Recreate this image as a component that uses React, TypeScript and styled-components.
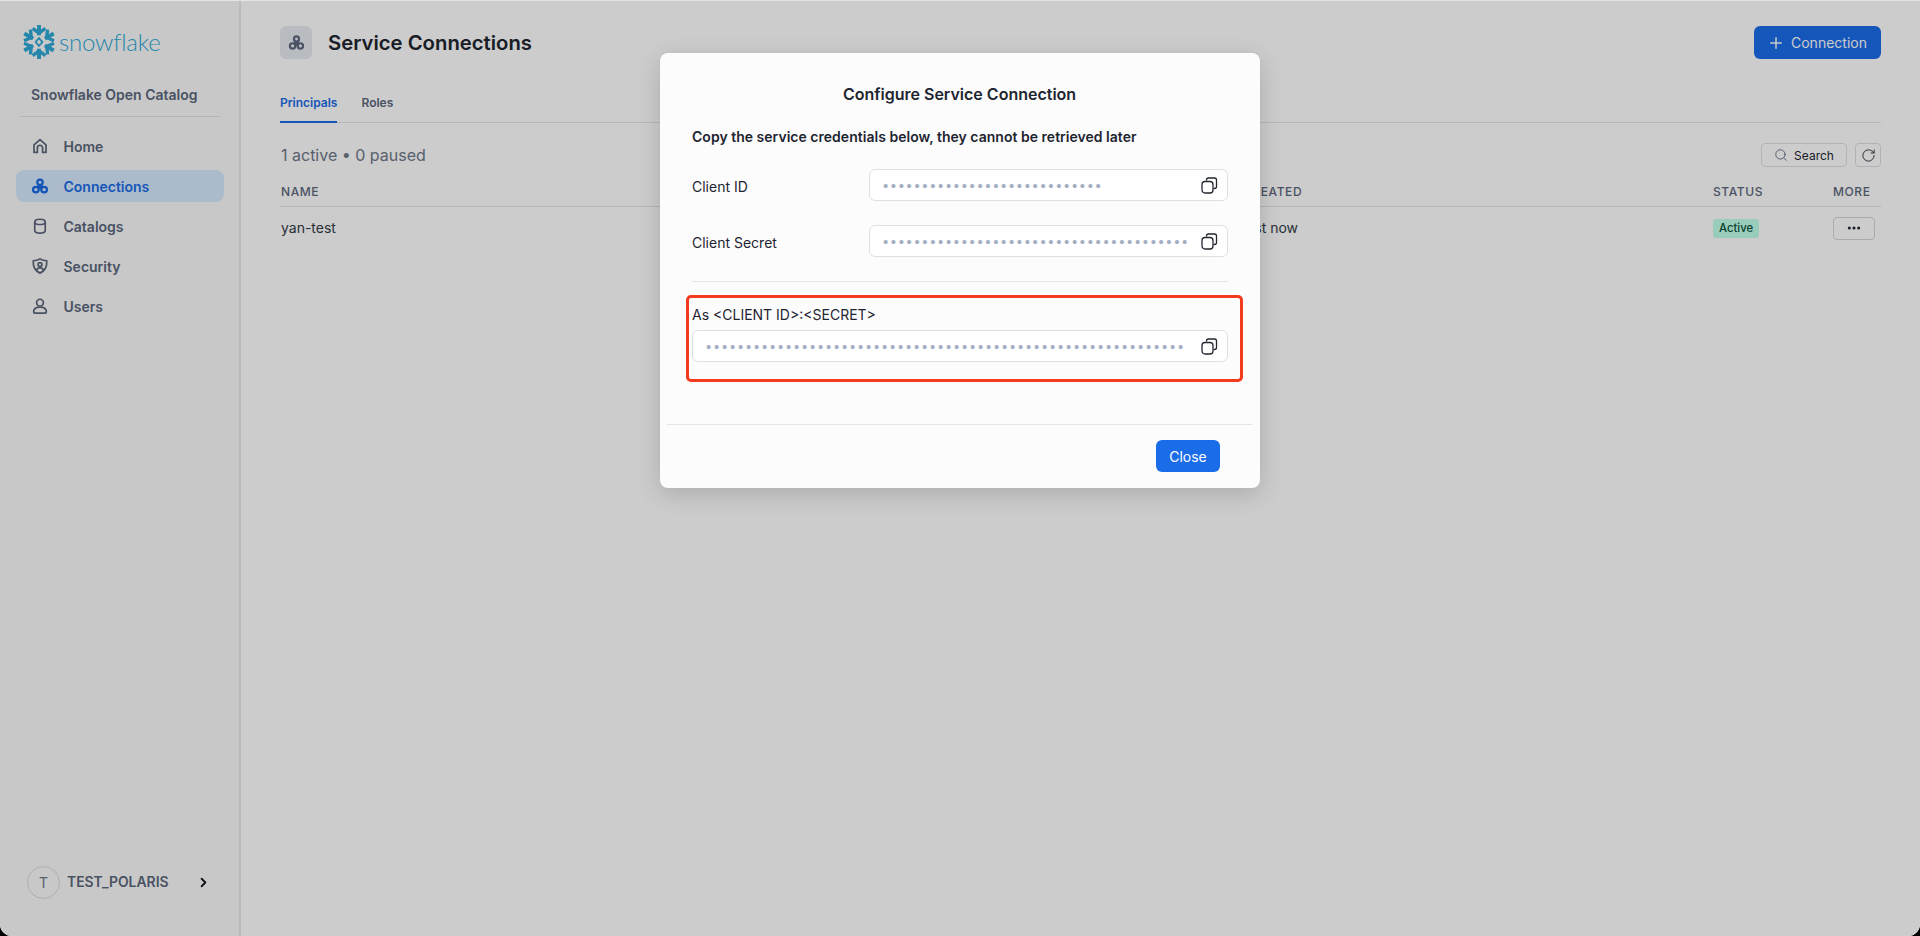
import React from "react";
import styled, { createGlobalStyle } from "styled-components";
import { Plus, Search, ChevronRight, RotateCw, Ellipsis } from "lucide-react";

const Global = createGlobalStyle`
  html, body { margin: 0; padding: 0; background: #000; height: 100%; overflow: hidden; }
  #root { height: 100%; }
  * { box-sizing: border-box; }
  body { font-family: Inter, "Liberation Sans", sans-serif; }
`;

const Frame = styled.div`
  position: relative;
  display: flex;
  width: 1920px;
  height: 936px;
  background: #ffffff;
  border-top: 1px solid #e4e4e4;
  border-radius: 0 0 12px 12px;
  overflow: hidden;
`;

const Sidebar = styled.aside`
  width: 241px;
  flex: none;
  display: flex;
  flex-direction: column;
  background: #fbfbfb;
  border-right: 2px solid #e9e9e9;
  padding: 24px 16px 0 16px;
`;

const LogoRow = styled.div`
  display: flex;
  align-items: center;
  gap: 3px;
  height: 34px;
  padding-left: 6px;
`;

const LogoWord = styled.span`
  font-family: Lato, "Open Sans", sans-serif;
  font-weight: 300;
  font-size: 24px;
  line-height: 32px;
  letter-spacing: -0.2px;
  color: #2fa9d6;
`;

const Org = styled.div`
  margin: 25px 3px 0 4px;
  padding: 0 0 10px 11px;
  border-bottom: 1px solid #dfe2e7;
  font-size: 14px;
  font-weight: 600;
  line-height: 22px;
  color: #5c677c;
`;

const NavList = styled.nav`
  display: flex;
  flex-direction: column;
  gap: 8px;
  margin-top: 13px;
`;

const NavItem = styled.div<{ $active?: boolean }>`
  display: flex;
  align-items: center;
  gap: 14.5px;
  width: 208px;
  height: 32px;
  padding-left: 15px;
  border-radius: 8px;
  font-size: 14px;
  font-weight: 600;
  background: ${(p) => (p.$active ? "#d7eaff" : "transparent")};
  color: ${(p) => (p.$active ? "#1a6ce7" : "#5c677c")};
  svg { flex: none; }
`;

const Account = styled.div`
  margin-top: auto;
  margin-bottom: 38px;
  display: flex;
  align-items: center;
  padding-left: 11px;
  height: 32px;
  font-size: 13.9px;
  font-weight: 600;
  color: #5c677c;
`;

const Avatar = styled.div`
  width: 33px;
  height: 33px;
  border-radius: 50%;
  border: 1px solid #d7dade;
  display: flex;
  align-items: center;
  justify-content: center;
  font-size: 14px;
  font-weight: 400;
  color: #6e7889;
  margin-right: 7px;
`;

const AccountChevron = styled.span`
  margin-left: 27px;
  display: flex;
  color: #14181f;
`;

const Main = styled.main`
  flex: 1;
  min-width: 0;
  display: flex;
  flex-direction: column;
  padding: 25px 39px 0 39px;
  background: #ffffff;
`;

const Header = styled.header`
  display: flex;
  align-items: center;
  justify-content: space-between;
  height: 33px;
`;

const TitleGroup = styled.div`
  display: flex;
  align-items: center;
  gap: 16px;
`;

const TitleIcon = styled.div`
  width: 32px;
  height: 33px;
  border-radius: 6px;
  background: #e7ebf1;
  color: #5c677c;
  display: flex;
  align-items: center;
  justify-content: center;
`;

const Title = styled.h1`
  margin: 0;
  font-size: 20.3px;
  font-weight: 600;
  color: #1e2530;
`;

const PrimaryButton = styled.button`
  display: flex;
  align-items: center;
  gap: 6px;
  width: 127px;
  height: 33px;
  padding: 0 0 0 13px;
  border: 0;
  border-radius: 6px;
  background: #1a6ce9;
  color: #ffffff;
  font-family: inherit;
  font-size: 14px;
  font-weight: 400;
`;

const Tabs = styled.div`
  display: flex;
  gap: 24px;
  height: 40px;
  margin-top: 24px;
  border-bottom: 1px solid #e3e5e9;
`;

const Tab = styled.div<{ $active?: boolean }>`
  height: 40px;
  padding-top: 2px;
  line-height: 36px;
  font-size: 12px;
  font-weight: 600;
  color: ${(p) => (p.$active ? "#1a6ce7" : "#5c677c")};
  border-bottom: 2px solid ${(p) => (p.$active ? "#1a6ce7" : "transparent")};
`;

const Toolbar = styled.div`
  display: flex;
  align-items: center;
  justify-content: space-between;
  height: 24px;
  margin-top: 20px;
`;

const Counts = styled.div`
  padding-left: 1px;
  font-size: 16px;
  color: #6e7889;
`;

const ToolGroup = styled.div`
  display: flex;
  gap: 8px;
`;

const ToolButton = styled.button<{ $square?: boolean }>`
  display: flex;
  align-items: center;
  justify-content: center;
  gap: 6px;
  width: ${(p) => (p.$square ? "26px" : "86px")};
  height: 24px;
  padding: 0;
  background: #ffffff;
  border: 1px solid #dde0e5;
  border-radius: 4px;
  color: #1e2530;
  font-family: inherit;
  font-size: 12px;
  svg { color: ${(p) => (p.$square ? "#2a303b" : "#5c677c")}; }
`;

const Columns = styled.div`
  display: grid;
  grid-template-columns: 962px 470px 120px 1fr;
  align-items: center;
  padding-left: 1px;
`;

const HeadRow = styled(Columns)`
  height: 29px;
  margin-top: 11px;
  border-bottom: 1px solid #e0e3e7;
  padding-bottom: 2px;
`;

const HeadCell = styled.div`
  font-size: 12px;
  font-weight: 500;
  letter-spacing: 0.6px;
  color: #5c677c;
`;

const BodyRow = styled(Columns)`
  height: 40px;
  font-size: 14px;
  color: #333b48;
`;

const WhenCell = styled.div`
  margin-left: -5px;
`;

const Badge = styled.span`
  display: inline-flex;
  align-items: center;
  height: 19px;
  margin-top: 2px;
  padding: 0 6px;
  border-radius: 3px;
  background: #c0ffea;
  color: #0a5239;
  font-size: 11.3px;
  font-weight: 500;
`;

const MoreButton = styled.button`
  display: flex;
  align-items: center;
  justify-content: center;
  width: 42px;
  height: 23px;
  margin-top: 2px;
  padding: 0;
  background: #ffffff;
  border: 1px solid #d5d8de;
  border-radius: 4px;
  color: #1e2530;
`;

const Overlay = styled.div`
  position: absolute;
  inset: 0;
  background: rgba(0, 0, 0, 0.2);
  display: flex;
  justify-content: center;
  align-items: flex-start;
  padding-top: 52px;
`;

const Modal = styled.section`
  width: 600px;
  height: 435px;
  background: #fcfcfd;
  border-radius: 8px;
  box-shadow: 0 6px 24px rgba(0, 0, 0, 0.16);
  display: flex;
  flex-direction: column;
  padding: 0 8px 0 7px;
`;

const ModalTitle = styled.h2`
  margin: 30px 0 0;
  font-size: 16px;
  font-weight: 600;
  line-height: 22px;
  text-align: center;
  color: #1e2530;
`;

const ModalBody = styled.div`
  display: flex;
  flex-direction: column;
  padding: 0 24px 0 25px;
  flex: 1;
`;

const Lead = styled.p`
  margin: 21px 0 0;
  font-size: 14px;
  font-weight: 600;
  line-height: 22px;
  letter-spacing: 0.02px;
  color: #1e2530;
`;

const FieldRow = styled.div<{ $first?: boolean }>`
  display: flex;
  align-items: center;
  justify-content: space-between;
  margin-top: ${(p) => (p.$first ? "21px" : "24px")};
  font-size: 14px;
  color: #1e2530;
`;

const FieldLabel = styled.span`
  padding-top: 2px;
`;

const Mask = styled.div`
  height: 32px;
  display: flex;
  align-items: center;
  justify-content: space-between;
  border: 1px solid #dcdfe6;
  border-radius: 6px;
  background: #ffffff;
  padding: 0 9px 0 13px;
  color: #a3aec2;
`;

const SmallMask = styled(Mask)`
  width: 359px;
`;

const Dots = styled.span<{ $wide?: boolean }>`
  font-family: "Liberation Sans", sans-serif;
  font-size: 15px;
  letter-spacing: ${(p) => (p.$wide ? "2.75px" : "2.62px")};
  white-space: nowrap;
  overflow: hidden;
`;

const Rule = styled.div`
  height: 1px;
  margin-top: 24px;
  background: #e2e5ea;
`;

const Highlight = styled.div`
  margin: 13px -15px 0 -6px;
  height: 87px;
  padding: 8px 12px 0 3px;
  border: 3px solid #f53b1e;
  border-radius: 5px;
`;

const HighlightLabel = styled.div`
  font-size: 14px;
  line-height: 18px;
  color: #1e2530;
`;

const WideMask = styled(Mask)`
  margin-top: 6px;
  padding-left: 13px;
`;

const ModalFooter = styled.footer`
  display: flex;
  justify-content: flex-end;
  height: 64px;
  padding: 15px 32px 0 0;
  border-top: 1px solid #e2e5ea;
`;

const CloseButton = styled.button`
  width: 64px;
  height: 32px;
  padding: 0;
  border: 0;
  border-radius: 6px;
  background: #1a6ce9;
  color: #fff;
  font-family: inherit;
  font-size: 14px;
`;

function SnowflakeMark() {
  const angles = [0, 60, 120, 180, 240, 300];
  return (
    <svg width="34" height="34" viewBox="-20 -20 40 40" fill="none" stroke="#2fa9d6" strokeLinecap="butt">
      {angles.map((a) => (
        <g key={a} transform={`rotate(${a})`}>
          <path d="M0 -8 L0 -20" strokeWidth="4.6" />
          <path d="M-7.5 -16 L0 -10.5 L7.5 -16" strokeWidth="4" strokeLinejoin="miter" />
        </g>
      ))}
      <path d="M0 -4.6 L4 0 L0 4.6 L-4 0 Z" strokeWidth="2.2" />
    </svg>
  );
}

const Stroke: React.FC<React.PropsWithChildren<{ size?: number }>> = ({ size = 18, children }) => (
  <svg width={size} height={size} viewBox="0 0 24 24" fill="none" stroke="currentColor" strokeWidth="2.3" strokeLinecap="round" strokeLinejoin="round">
    {children}
  </svg>
);

const HomeIcon = () => (
  <Stroke>
    <path d="M4 20.5V10.5L12 3.5L20 10.5V20.5H15.5V14.5A3.5 3.5 0 0 0 8.500 14.500V20.5Z" />
  </Stroke>
);

const ConnIcon = ({ size = 18 }: { size?: number }) => (
  <svg width={size} height={size} viewBox="0 0 24 24" fill="none" stroke="currentColor" strokeWidth="3">
    <circle cx="12" cy="7" r="3.600" />
    <circle cx="6.500" cy="16.800" r="3.800" />
    <circle cx="17.500" cy="16.800" r="3.800" />
    <path d="M8.500 11L15.500 11L12 17Z" fill="currentColor" strokeWidth="1" strokeLinejoin="round" />
  </svg>
);

const CatalogIcon = () => (
  <Stroke>
    <path d="M5 6.500C5 4.500 8 3 12 3S19 4.500 19 6.500V18C19 20 16 21.500 12 21.500S5 20 5 18Z" />
    <path d="M5 6.500C5 8.500 8 10 12 10S19 8.500 19 6.500" />
  </Stroke>
);

const ShieldIcon = () => (
  <Stroke>
    <path d="M12 2.500C15 4.500 18 5 21 5C21.500 12 19.500 18 12 21.500C4.500 18 2.500 12 3 5C6 5 9 4.500 12 2.500Z" />
    <circle cx="12" cy="10" r="2.600" />
    <path d="M7.500 17C8.500 15 10 14.500 12 14.500S15.500 15 16.500 17" />
  </Stroke>
);

const UserIcon = () => (
  <Stroke>
    <circle cx="12" cy="7.500" r="4.500" />
    <path d="M3.500 20C3.500 15.500 7 13.500 12 13.500S20.500 15.500 20.500 20C20.500 21 20 21.500 19 21.500H5C4 21.500 3.500 21 3.500 20Z" />
  </Stroke>
);

const CopyIcon = () => (
  <svg width="17" height="17" viewBox="0 0 17 17" fill="none" stroke="#23272f" strokeWidth="1.300" strokeLinejoin="round">
    <path d="M5.500 3.500V3A2 2 0 0 1 7.500 1H13.500A2 2 0 0 1 15.500 3V9.500A2 2 0 0 1 13.500 11.500H12.500" />
    <rect x="1" y="4.500" width="11" height="11.500" rx="3" />
  </svg>
);

export default function App() {
  return (
    <>
      <Global />
      <Frame>
        <Sidebar>
          <LogoRow>
            <SnowflakeMark />
            <LogoWord>snowflake</LogoWord>
          </LogoRow>
          <Org>Snowflake Open Catalog</Org>
          <NavList>
            <NavItem><HomeIcon />Home</NavItem>
            <NavItem $active><ConnIcon />Connections</NavItem>
            <NavItem><CatalogIcon />Catalogs</NavItem>
            <NavItem><ShieldIcon />Security</NavItem>
            <NavItem><UserIcon />Users</NavItem>
          </NavList>
          <Account>
            <Avatar>T</Avatar>
            TEST_POLARIS
            <AccountChevron><ChevronRight size={15} strokeWidth={3} /></AccountChevron>
          </Account>
        </Sidebar>
        <Main>
          <Header>
            <TitleGroup>
              <TitleIcon><ConnIcon size={17} /></TitleIcon>
              <Title>Service Connections</Title>
            </TitleGroup>
            <PrimaryButton><Plus size={18} strokeWidth={2} />Connection</PrimaryButton>
          </Header>
          <Tabs>
            <Tab $active>Principals</Tab>
            <Tab>Roles</Tab>
          </Tabs>
          <Toolbar>
            <Counts>1 active • 0 paused</Counts>
            <ToolGroup>
              <ToolButton><Search size={14} strokeWidth={1.5} />Search</ToolButton>
              <ToolButton $square><RotateCw size={15} strokeWidth={1.5} /></ToolButton>
            </ToolGroup>
          </Toolbar>
          <HeadRow>
            <HeadCell>NAME</HeadCell>
            <HeadCell>CREATED</HeadCell>
            <HeadCell>STATUS</HeadCell>
            <HeadCell>MORE</HeadCell>
          </HeadRow>
          <BodyRow>
            <div>yan-test</div>
            <WhenCell>Just now</WhenCell>
            <div><Badge>Active</Badge></div>
            <div><MoreButton><Ellipsis size={16} strokeWidth={2.6} /></MoreButton></div>
          </BodyRow>
        </Main>
        <Overlay>
          <Modal>
            <ModalTitle>Configure Service Connection</ModalTitle>
            <ModalBody>
              <Lead>Copy the service credentials below, they cannot be retrieved later</Lead>
              <FieldRow $first>
                <FieldLabel>Client ID</FieldLabel>
                <SmallMask><Dots>{"•".repeat(28)}</Dots><CopyIcon /></SmallMask>
              </FieldRow>
              <FieldRow>
                <FieldLabel>Client Secret</FieldLabel>
                <SmallMask><Dots>{"•".repeat(39)}</Dots><CopyIcon /></SmallMask>
              </FieldRow>
              <Rule />
              <Highlight>
                <HighlightLabel>{"As <CLIENT ID>:<SECRET>"}</HighlightLabel>
                <WideMask><Dots $wide>{"•".repeat(60)}</Dots><CopyIcon /></WideMask>
              </Highlight>
            </ModalBody>
            <ModalFooter>
              <CloseButton>Close</CloseButton>
            </ModalFooter>
          </Modal>
        </Overlay>
      </Frame>
    </>
  );
}
